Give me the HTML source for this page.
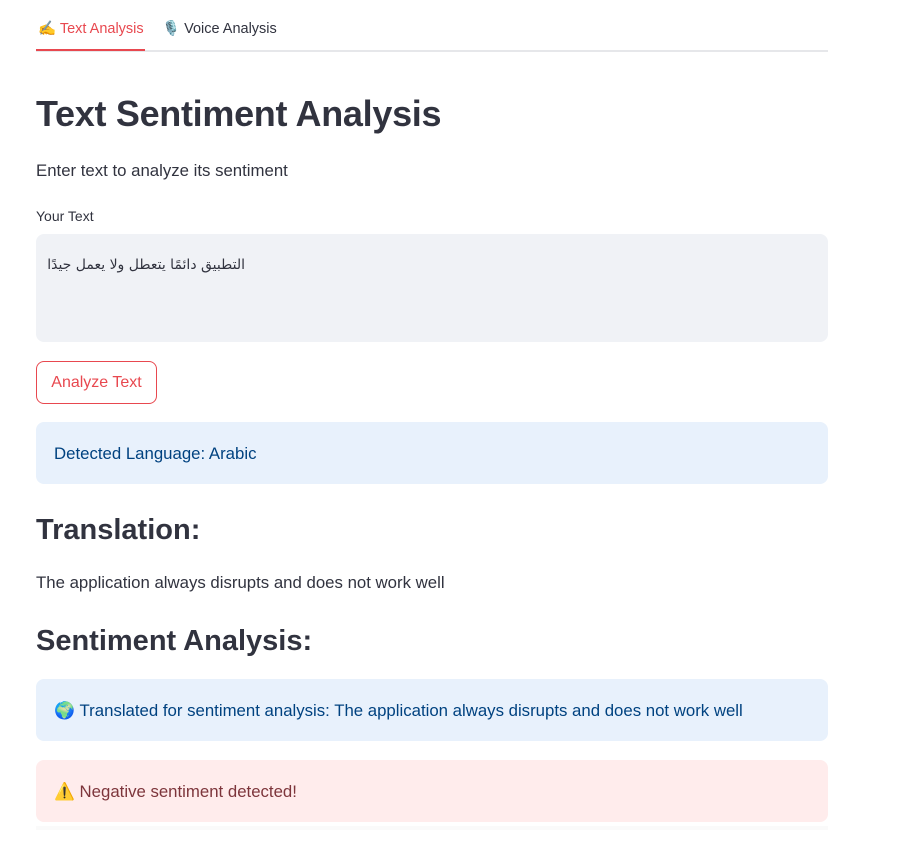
<!DOCTYPE html>
<html><head><meta charset="utf-8"><style>
body{margin:0;background:#fff;font-family:"Liberation Sans",sans-serif;color:#31333f;width:903px;height:862px;overflow:hidden;position:relative}
.a{position:absolute;left:36px;width:792px}
.tabs{top:0;height:52px;border-bottom:2px solid #e6e7ea;box-sizing:border-box}
.tab{position:absolute;top:20px;font-size:14.5px;white-space:nowrap}
.ul{position:absolute;left:0;top:49px;width:109px;height:2px;background:#e8484f}
.box{border-radius:8px;font-size:16.8px;box-sizing:border-box;padding-left:18px;display:flex;align-items:center}
</style></head><body>
<div class="a tabs">
<div class="tab" style="left:2px;color:#e8484f">✍️ Text Analysis</div>
<div class="tab" style="left:126px">🎙️ Voice Analysis</div>
<div class="ul"></div>
</div>
<div class="a" style="top:93px;font-size:36px;font-weight:bold;letter-spacing:-0.3px">Text Sentiment Analysis</div>
<div class="a" style="top:161px;font-size:16.8px">Enter text to analyze its sentiment</div>
<div class="a" style="top:208px;font-size:14px">Your Text</div>
<div class="a" style="top:234px;height:108px;background:#f0f2f6;border-radius:8px"><div style="position:absolute;left:16px;top:23px;width:193px;font-size:14px;font-family:'DejaVu Sans',sans-serif;direction:rtl;white-space:nowrap;text-align:left">التطبيق دائمًا يتعطل ولا يعمل جيدًا</div></div>
<div style="position:absolute;left:36px;top:361px;width:121px;height:43px;border:1px solid #e8484f;border-radius:8px;box-sizing:border-box;color:#e8484f;font-size:16px;display:flex;align-items:center;justify-content:center">Analyze Text</div>
<div class="a box" style="top:422px;height:62px;background:#e8f1fc;color:#004280;padding-top:2px">Detected Language: Arabic</div>
<div class="a" style="top:514px;font-size:29px;font-weight:bold">Translation:</div>
<div class="a" style="top:573px;font-size:16.8px">The application always disrupts and does not work well</div>
<div class="a" style="top:625px;font-size:29px;font-weight:bold">Sentiment Analysis:</div>
<div class="a box" style="top:679px;height:62px;background:#e8f1fc;color:#004280;padding-top:2px">🌍&nbsp;Translated for sentiment analysis: The application always disrupts and does not work well</div>
<div class="a box" style="top:760px;height:62px;background:#ffecec;color:#7d353b;padding-top:2px">⚠️&nbsp;Negative sentiment detected!</div>
<div class="a" style="top:826px;height:4px;background:#fafafa"></div>
</body></html>
